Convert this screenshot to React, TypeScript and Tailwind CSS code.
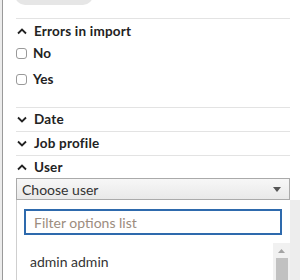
import React from 'react'

function Chevron({ open }: { open: boolean }) {
  return (
    <svg width="10" height="7" viewBox="0 0 10 7" className="shrink-0">
      <polyline
        points={open ? '1,5.5 5,1.5 9,5.5' : '1,1.5 5,5.5 9,1.5'}
        fill="none"
        stroke="#222"
        strokeWidth="1.8"
      />
    </svg>
  )
}

function SectionHeader({ label, open, bordered = true }: { label: string; open: boolean; bordered?: boolean }) {
  return (
    <div className={`flex items-center gap-[7px] h-[24px] pl-[1px] ${bordered ? 'border-t border-[#e3e3e3]' : ''}`}>
      <Chevron open={open} />
      <span className="text-[13.5px] font-bold text-[#222] tracking-[0.2px]">{label}</span>
    </div>
  )
}

function Check({ label }: { label: string }) {
  return (
    <label className="flex items-center gap-[6px] h-[20px]">
      <span className="w-[11px] h-[11px] rounded-[3px] border border-[#999] bg-white" />
      <span className="text-[13.5px] font-bold text-[#222]">{label}</span>
    </label>
  )
}

export default function App() {
  return (
    <div className="w-[300px] h-[280px] overflow-hidden bg-white flex" style={{ fontFamily: 'Lato, "Open Sans", sans-serif' }}>
      {/* pane edge */}
      <div className="w-[2px] bg-[#ececec] shrink-0" />
      <div className="w-[1px] bg-[#9a9a9a] shrink-0" />

      <div className="flex-1 pl-[13px] pr-[10px]">
        {/* reset button (cut off) */}
        <div className="w-[78px] h-[20px] -mt-[15px] ml-[-1px] rounded-[10px] bg-[#e6e6e6]" />

        <div className="mt-[13px] border-t border-[#e3e3e3]" />

        {/* Errors in import */}
        <SectionHeader label="Errors in import" open bordered={false} />
        <div className="flex flex-col gap-[6px]">
          <Check label="No" />
          <Check label="Yes" />
        </div>

        <div className="mt-[18px]">
          <SectionHeader label="Date" open={false} />
          <SectionHeader label="Job profile" open={false} />
          <SectionHeader label="User" open />
        </div>

        {/* select */}
        <div className="mt-[-1px] h-[22px] flex items-center justify-between border border-[#aaaaaa] bg-gradient-to-b from-[#f7f7f7] to-[#e9e9e9] pl-[5px] pr-[8px]">
          <span className="text-[14px] text-[#333]">Choose user</span>
          <svg width="8" height="5" viewBox="0 0 8 5">
            <polygon points="0,0 8,0 4,5" fill="#555" />
          </svg>
        </div>

        {/* dropdown panel */}
        <div className="flex -mr-[10px] h-[100px]">
          <div className="flex-1 border-l border-[#cfcfcf] bg-white pt-[9px] pl-[7px] pr-[8px]">
            <div className="h-[26px] border-2 border-[#2e6aad] flex items-center pl-[8px]">
              <span className="text-[14px] text-[#9c8c7e]">Filter options list</span>
            </div>
            <div className="mt-[8px] flex -mr-[8px]">
              <div className="flex-1 pt-[8px] pl-[6px] text-[14px] text-[#333]">admin admin</div>
              <div className="w-[17px] h-[60px] bg-[#f1f1f1] flex flex-col items-center pt-[6px]">
                <svg width="7" height="4" viewBox="0 0 7 4">
                  <polygon points="0,4 7,4 3.5,0" fill="#a3a3a3" />
                </svg>
                <div className="mt-[5px] w-[12px] flex-1 bg-[#c1c1c1]" />
              </div>
            </div>
          </div>
          <div className="w-[10px] bg-[#ededed]" />
        </div>
      </div>
    </div>
  )
}
